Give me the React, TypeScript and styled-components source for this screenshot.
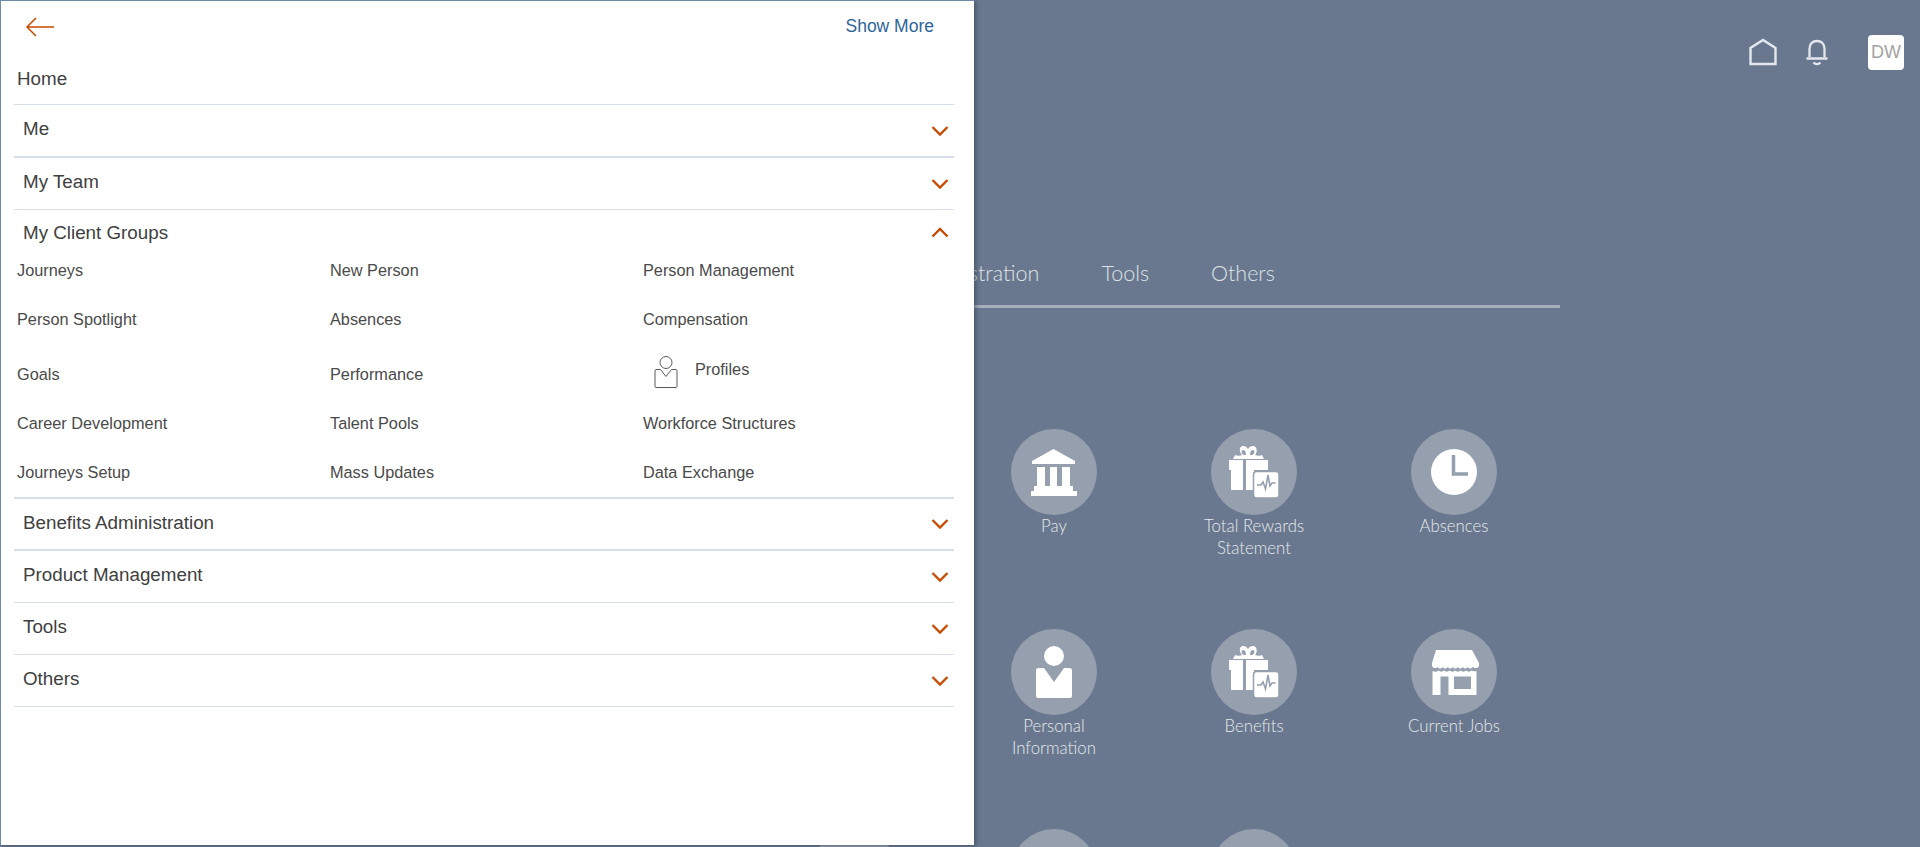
import React from "react";
import styled, { createGlobalStyle } from "styled-components";

const GlobalStyle = createGlobalStyle`
	html, body {
		margin: 0;
		height: 100%;
		overflow: hidden;
		background: #69788e;
	}
	* {
		box-sizing: border-box;
	}
`;

const Page = styled.div`
	position: relative;
	width: 1920px;
	height: 847px;
	overflow: hidden;
	background: #69788e;
	font-family: "Liberation Sans", Arial, sans-serif;
`;
const TopBar = styled.div`
	display: flex;
	justify-content: flex-end;
	align-items: center;
	height: 104px;
	padding-right: 16px;
`;
const HeaderIcon = styled.svg<{ $gap: number }>`
	display: block;
	margin-right: ${(p) => p.$gap}px;
`;
const Avatar = styled.div`
	width: 36px;
	height: 35px;
	background: #fff;
	border-radius: 4px;
	color: #a3a3a3;
	font-size: 18px;
	display: flex;
	align-items: center;
	justify-content: center;
`;
const Content = styled.div`
	width: 1200px;
	margin-left: 360px;
`;
const Tabs = styled.div`
	display: flex;
	justify-content: flex-end;
	gap: 62px;
	height: 204px;
	padding: 154px 285px 0 0;
	border-bottom: 3px solid #a5aeba;
	font-family: Lato, sans-serif;
	font-weight: 300;
	font-size: 21.5px;
	line-height: 30px;
	color: #dfe3e8;
`;
const Grid = styled.div`
	display: grid;
	grid-template-columns: repeat(4, 200px);
	grid-auto-rows: 200px;
	justify-content: end;
	padding: 121px 6px 0 0;
`;
const Tile = styled.div`
	display: flex;
	flex-direction: column;
	align-items: center;
`;
const Circle = styled.div`
	width: 86px;
	height: 86px;
	flex-shrink: 0;
	border-radius: 50%;
	background: #959fae;
	display: flex;
	align-items: center;
	justify-content: center;
`;
const TileLabel = styled.div`
	width: 130px;
	text-align: center;
	font-family: Lato, sans-serif;
	font-weight: 300;
	font-size: 16.8px;
	line-height: 22px;
	color: #e6e9ed;
`;

const Panel = styled.div`
	position: absolute;
	left: 0;
	top: 0;
	width: 974px;
	height: 845px;
	background: #fff;
	border: 1px solid #6d8ba8;
	border-right: none;
	border-bottom: none;
	box-shadow: 2px 1px 4px rgba(50, 60, 75, 0.55);
	padding: 0 20px 0 13px;
	color: #404040;
`;
const PanelTop = styled.div`
	display: flex;
	align-items: center;
	justify-content: space-between;
	height: 52px;
	padding: 0 20px 0 11px;
`;
const ShowMore = styled.a`
	color: #2f6499;
	font-size: 17.5px;
	margin-top: -2px;
`;
const HomeRow = styled.div`
	height: 52px;
	padding: 0 3px;
	display: flex;
	align-items: center;
	font-size: 18.8px;
	border-bottom: 1px solid #d6dfe7;
`;
const SectionRow = styled.div<{ $thick?: boolean; $tall?: boolean; $open?: boolean }>`
	height: ${(p) => (p.$open ? 44 : p.$tall ? 53 : 52)}px;
	display: flex;
	align-items: ${(p) => (p.$open ? "flex-start" : "center")};
	justify-content: space-between;
	padding: ${(p) => (p.$open ? "12px" : "0")} 5px 0 9px;
	font-size: 18.8px;
	line-height: 22px;
	border-bottom: ${(p) => (p.$open ? "none" : `${p.$thick ? 2 : 1}px solid #d6dfe7`)};
`;
const SectionLabel = styled.span<{ $open?: boolean }>`
	margin-bottom: ${(p) => (p.$open ? "0" : "3px")};
`;
const SubMenu = styled.div`
	display: grid;
	grid-template-columns: repeat(3, 313px);
	grid-template-rows: 49px 55px 49px 49px 43px;
	height: 245px;
	padding-left: 3px;
	border-bottom: 2px solid #d6dfe7;
	font-size: 16.3px;
	color: #4a4a4a;
`;
const SubItem = styled.div`
	padding-top: 6px;
	line-height: 20px;
`;
const ProfileItem = styled.div`
	display: flex;
	align-items: flex-start;
	gap: 17px;
	padding: 3px 0 0 11px;
	margin-top: -5px;
	line-height: 20px;
`;
const ProfileText = styled.span`
	display: block;
	margin-top: 3px;
`;
const ChevronIcon = styled.svg<{ $up?: boolean }>`
	display: block;
	margin-top: ${(p) => (p.$up ? "4px" : "0")};
`;

const ICON = "#c74a00";
const DISC = "#959fae";

function Chevron({ up }: { up?: boolean }) {
	return (
		<ChevronIcon $up={up} width="18" height="12" viewBox="0 0 18 12" fill="none">
			<path d={up ? "M1.500 10.500L9 3l7.500 7.500" : "M1.500 2L9 9.500 16.500 2"} stroke={ICON} strokeWidth="2.300" />
		</ChevronIcon>
	);
}

function Bank() {
	return (
		<svg width="46" height="47" viewBox="0 0 46 47" fill="#fff">
			<path d="M22.500 0L44 12v3H1v-3z" />
			<path d="M6 18h8v19H6zM19 18h7v19h-7zM31 18h8v19h-8zM3 37h39v5H3zM0 42h46v5H0z" />
		</svg>
	);
}

function Gift() {
	return (
		<svg width="50" height="52" viewBox="0 0 50 52" fill="#fff">
			<path
				fillRule="evenodd"
				d="M14 0c2 0 4 1 5 3 1-2 3-3 5-3 4 0 5 6 2 9 3 1 5 1 7 0l2 4H4l2-4c2 1 5 1 7 0-3-3-3-9 1-9zM14 4c-2 0-2 4 1 5h2c0-3-1-5-3-5zM24 4c-2 0-3 2-3 5h2c3-1 3-5 1-5z"
			/>
			<path d="M0 14h14v10H0zM17 14h22v10H17zM2 24h12v20H2zM17 24h8v20h-8z" />
			<rect x="24.500" y="25.500" width="25.500" height="26.500" rx="3" stroke={DISC} strokeWidth="1.500" />
			<path d="M28 39h4l2-3 2.500 7 2.500-14 2 11 2-3h3.500" fill="none" stroke={DISC} strokeWidth="1.600" />
		</svg>
	);
}

function Clock() {
	return (
		<svg width="46" height="48" viewBox="0 0 46 48">
			<circle cx="23" cy="24" r="23" fill="#fff" />
			<path d="M22.500 7v19H37" fill="none" stroke={DISC} strokeWidth="3.500" />
		</svg>
	);
}

function Person() {
	return (
		<svg width="36" height="52" viewBox="0 0 36 52" fill="#fff">
			<circle cx="18" cy="10" r="10" />
			<path d="M2 22h6l10 14 10-14h6c1 0 2 1 2 2v26c0 1-1 2-2 2H2c-1 0-2-1-2-2V24c0-1 1-2 2-2z" />
		</svg>
	);
}

function Store() {
	return (
		<svg width="50" height="45" viewBox="0 0 50 45" fill="#fff">
			<path d="M7 0h36l7 13v2c0 2-1 3-3 3-1 0-2 0-3-1-2 2-4 2-5 0-2 2-4 2-5 0-2 2-4 2-5 0-2 2-4 2-5 0-2 2-4 2-5 0-2 2-4 2-5 0-2 2-4 2-5 0-1 1-2 1-3 1-2 0-3-1-3-3v-2z" />
			<path
				fillRule="evenodd"
				d="M3.500 21c2 1 4 1 6-.500 2 1.500 4 1.500 5.500 0 2 1.500 4 1.500 5.500 0 2 1.500 4 1.500 5.500 0 2 1.500 4 1.500 5.500 0 2 1.500 4 1.500 5.500 0 2 1.500 4 1.500 5.500 0 1 .5 3 1 5 .500V45H19.500V26.500H11.500V45h-8zM25 26.500V39h17V26.500z"
			/>
		</svg>
	);
}

function ProfileIcon() {
	return (
		<svg width="24" height="32" viewBox="0 0 24 32" fill="none" stroke="#5a5a5a" strokeWidth="1">
			<circle cx="12" cy="6.500" r="6" />
			<path d="M2 13.500h4.500l5.500 7 5.500-7H22c.5 0 1 .5 1 1v16c0 .5-.5 1-1 1H2c-.5 0-1-.5-1-1v-16c0-.5.5-1 1-1z" />
		</svg>
	);
}

const tiles: { label?: string; icon?: React.ReactNode }[] = [
	{},
	{ label: "Pay", icon: <Bank /> },
	{ label: "Total Rewards Statement", icon: <Gift /> },
	{ label: "Absences", icon: <Clock /> },
	{},
	{ label: "Personal Information", icon: <Person /> },
	{ label: "Benefits", icon: <Gift /> },
	{ label: "Current Jobs", icon: <Store /> },
	{},
	{},
	{},
];

const subItems = [
	"Journeys",
	"New Person",
	"Person Management",
	"Person Spotlight",
	"Absences",
	"Compensation",
	"Goals",
	"Performance",
	"Profiles",
	"Career Development",
	"Talent Pools",
	"Workforce Structures",
	"Journeys Setup",
	"Mass Updates",
	"Data Exchange",
];

export default function App() {
	return (
		<Page>
			<GlobalStyle />
			<TopBar>
				<HeaderIcon $gap={28} width="28" height="28" viewBox="0 0 28 28" fill="none" stroke="#e3e8ef" strokeWidth="2.400">
					<path d="M1.500 26V10L14 2l12.500 8v16z" />
				</HeaderIcon>
				<HeaderIcon $gap={39} width="24" height="28" viewBox="0 0 24 28" fill="none" stroke="#e3e8ef" strokeWidth="2.300">
					<path d="M4.500 19V11c0-5 3-8 7.500-8s7.500 3 7.500 8v8M1.500 20.500h21M8.500 24.500c2 2 5 2 7 0" />
				</HeaderIcon>
				<Avatar>DW</Avatar>
			</TopBar>
			<Content>
				<Tabs>
					<span>Benefits Administration</span>
					<span>Tools</span>
					<span>Others</span>
				</Tabs>
				<Grid>
					{tiles.map((t, i) => (
						<Tile key={i}>
							<Circle>{t.icon}</Circle>
							{t.label && <TileLabel>{t.label}</TileLabel>}
						</Tile>
					))}
				</Grid>
			</Content>

			<Panel>
				<PanelTop>
					<svg width="30" height="20" viewBox="0 0 30 20" fill="none" stroke={ICON} strokeWidth="1.500">
						<path d="M29 10H2M11 1l-9 9 9 9" />
					</svg>
					<ShowMore>Show More</ShowMore>
				</PanelTop>
				<HomeRow>Home</HomeRow>
				<SectionRow $thick $tall>
					<SectionLabel>Me</SectionLabel>
					<Chevron />
				</SectionRow>
				<SectionRow>
					<SectionLabel>My Team</SectionLabel>
					<Chevron />
				</SectionRow>
				<SectionRow $open>
					<SectionLabel $open>My Client Groups</SectionLabel>
					<Chevron up />
				</SectionRow>
				<SubMenu>
					{subItems.map((s) =>
						s === "Profiles" ? (
							<ProfileItem key={s}>
								<ProfileIcon />
								<ProfileText>{s}</ProfileText>
							</ProfileItem>
						) : (
							<SubItem key={s}>{s}</SubItem>
						),
					)}
				</SubMenu>
				<SectionRow $thick>
					<SectionLabel>Benefits Administration</SectionLabel>
					<Chevron />
				</SectionRow>
				<SectionRow>
					<SectionLabel>Product Management</SectionLabel>
					<Chevron />
				</SectionRow>
				<SectionRow>
					<SectionLabel>Tools</SectionLabel>
					<Chevron />
				</SectionRow>
				<SectionRow>
					<SectionLabel>Others</SectionLabel>
					<Chevron />
				</SectionRow>
			</Panel>
		</Page>
	);
}
